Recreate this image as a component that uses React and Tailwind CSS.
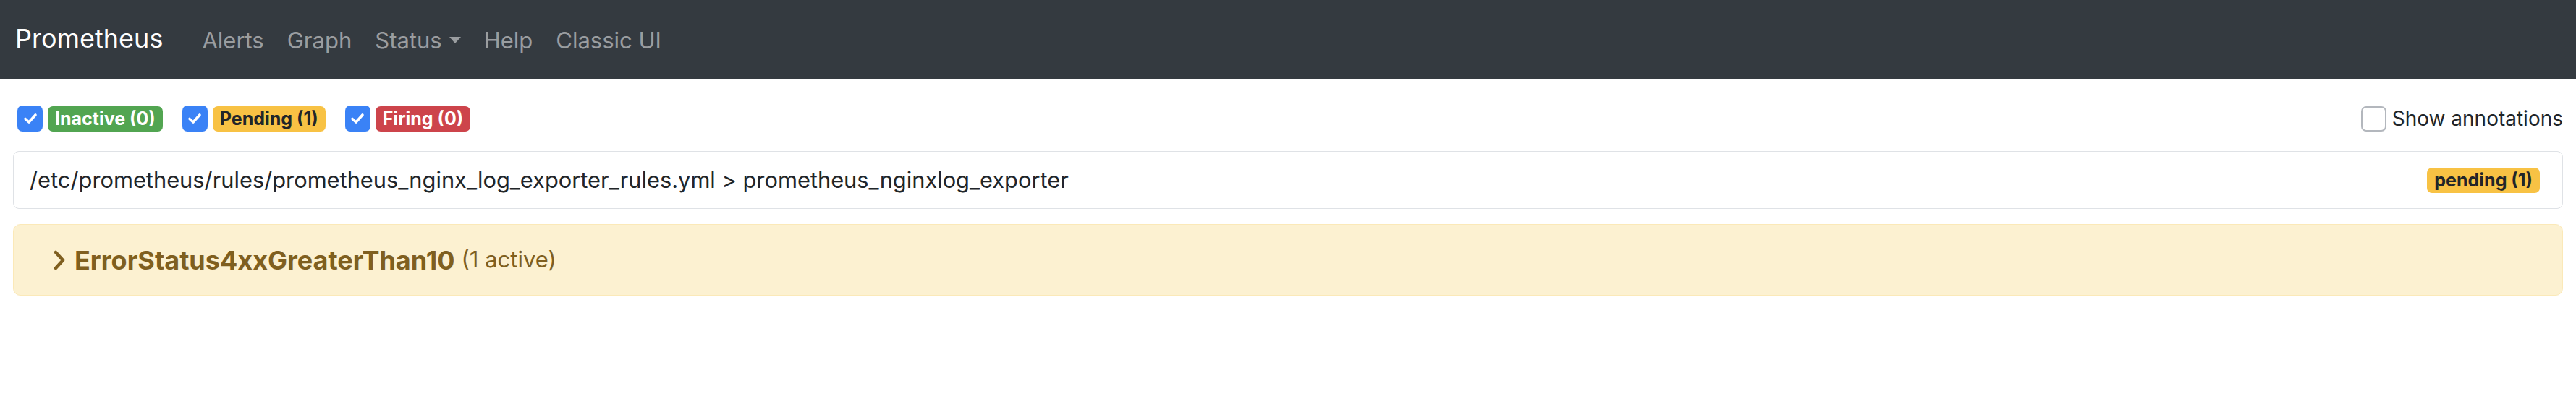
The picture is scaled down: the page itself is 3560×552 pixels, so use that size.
const font = { fontFamily: 'Inter, "Liberation Sans", sans-serif' }

function Check({ checked }) {
  if (!checked) {
    return <span className="w-[35px] h-[35px] rounded-[7px] border-2 border-[#b3b7bd] bg-white flex-shrink-0" />
  }
  return (
    <span className="w-[35px] h-[36px] rounded-[7px] bg-[#3a82f6] flex items-center justify-center flex-shrink-0">
      <svg width="20" height="16" viewBox="0 0 20 16" fill="none">
        <path d="M3 8.5 L8 13 L17 3" stroke="white" strokeWidth="3.6" strokeLinecap="round" strokeLinejoin="round" />
      </svg>
    </span>
  )
}

function Badge({ children, color }) {
  return (
    <span className={`h-[35px] px-[10px] rounded-[7px] flex items-center text-[25px] font-bold leading-none ${color}`}>
      {children}
    </span>
  )
}

export default function App() {
  const filters = [
    { label: 'Inactive (0)', color: 'bg-[#52a551] text-white' },
    { label: 'Pending (1)', color: 'bg-[#f8c244] text-[#212529]' },
    { label: 'Firing (0)', color: 'bg-[#cd444b] text-white' },
  ]

  return (
    <div className="w-[3560px] h-[552px] bg-white text-[#212529]" style={font}>
      {/* navbar */}
      <nav className="h-[109px] bg-[#343a40] flex items-center pl-[21px]">
        <span className="text-[36px] text-white leading-none mr-[38px] mb-[3px]">Prometheus</span>
        {['Alerts', 'Graph'].map(l => (
          <span key={l} className="px-[16px] text-[31px] text-[#9a9da0] leading-none mt-[2px]">{l}</span>
        ))}
        <span className="px-[16px] text-[31px] text-[#9a9da0] leading-none mt-[2px] flex items-center gap-[10px]">
          Status
          <span className="w-0 h-0 border-l-[8px] border-r-[8px] border-t-[9px] border-l-transparent border-r-transparent border-t-[#9a9da0]" />
        </span>
        {['Help', 'Classic UI'].map(l => (
          <span key={l} className="px-[16px] text-[31px] text-[#9a9da0] leading-none mt-[2px]">{l}</span>
        ))}
      </nav>

      <div className="px-[18px] pt-[37px]">
        {/* filter row */}
        <div className="flex items-center justify-between">
          <div className="flex items-center gap-[27px] pl-[6px]">
            {filters.map(f => (
              <label key={f.label} className="flex items-center gap-[7px]">
                <Check checked />
                <Badge color={f.color}>{f.label}</Badge>
              </label>
            ))}
          </div>
          <label className="flex items-center gap-[8px]">
            <Check />
            <span className="text-[28px] leading-none">Show annotations</span>
          </label>
        </div>

        {/* group header */}
        <div className="mt-[27px] h-[80px] border border-[#dfe2e6] rounded-[8px] flex items-center justify-between pl-[22px] pr-[31px]">
          <span className="text-[30.8px]">/etc/prometheus/rules/prometheus_nginx_log_exporter_rules.yml &gt; prometheus_nginxlog_exporter</span>
          <Badge color="bg-[#f8c244] text-[#212529]">pending (1)</Badge>
        </div>

        {/* alert rule */}
        <div className="mt-[21px] h-[99px] bg-[#fcf1d1] border border-[#fbe9b8] rounded-[10px] flex items-center pl-[54px] text-[#7f5f1f]">
          <svg width="18" height="28" viewBox="0 0 18 28" fill="none" className="mr-[12px]">
            <path d="M4 3 L14 14 L4 25" stroke="currentColor" strokeWidth="4.5" strokeLinecap="round" strokeLinejoin="round" />
          </svg>
          <span className="text-[36px] font-bold">ErrorStatus4xxGreaterThan10</span>
          <span className="text-[31px] ml-[9px]">(1 active)</span>
        </div>
      </div>
    </div>
  )
}
